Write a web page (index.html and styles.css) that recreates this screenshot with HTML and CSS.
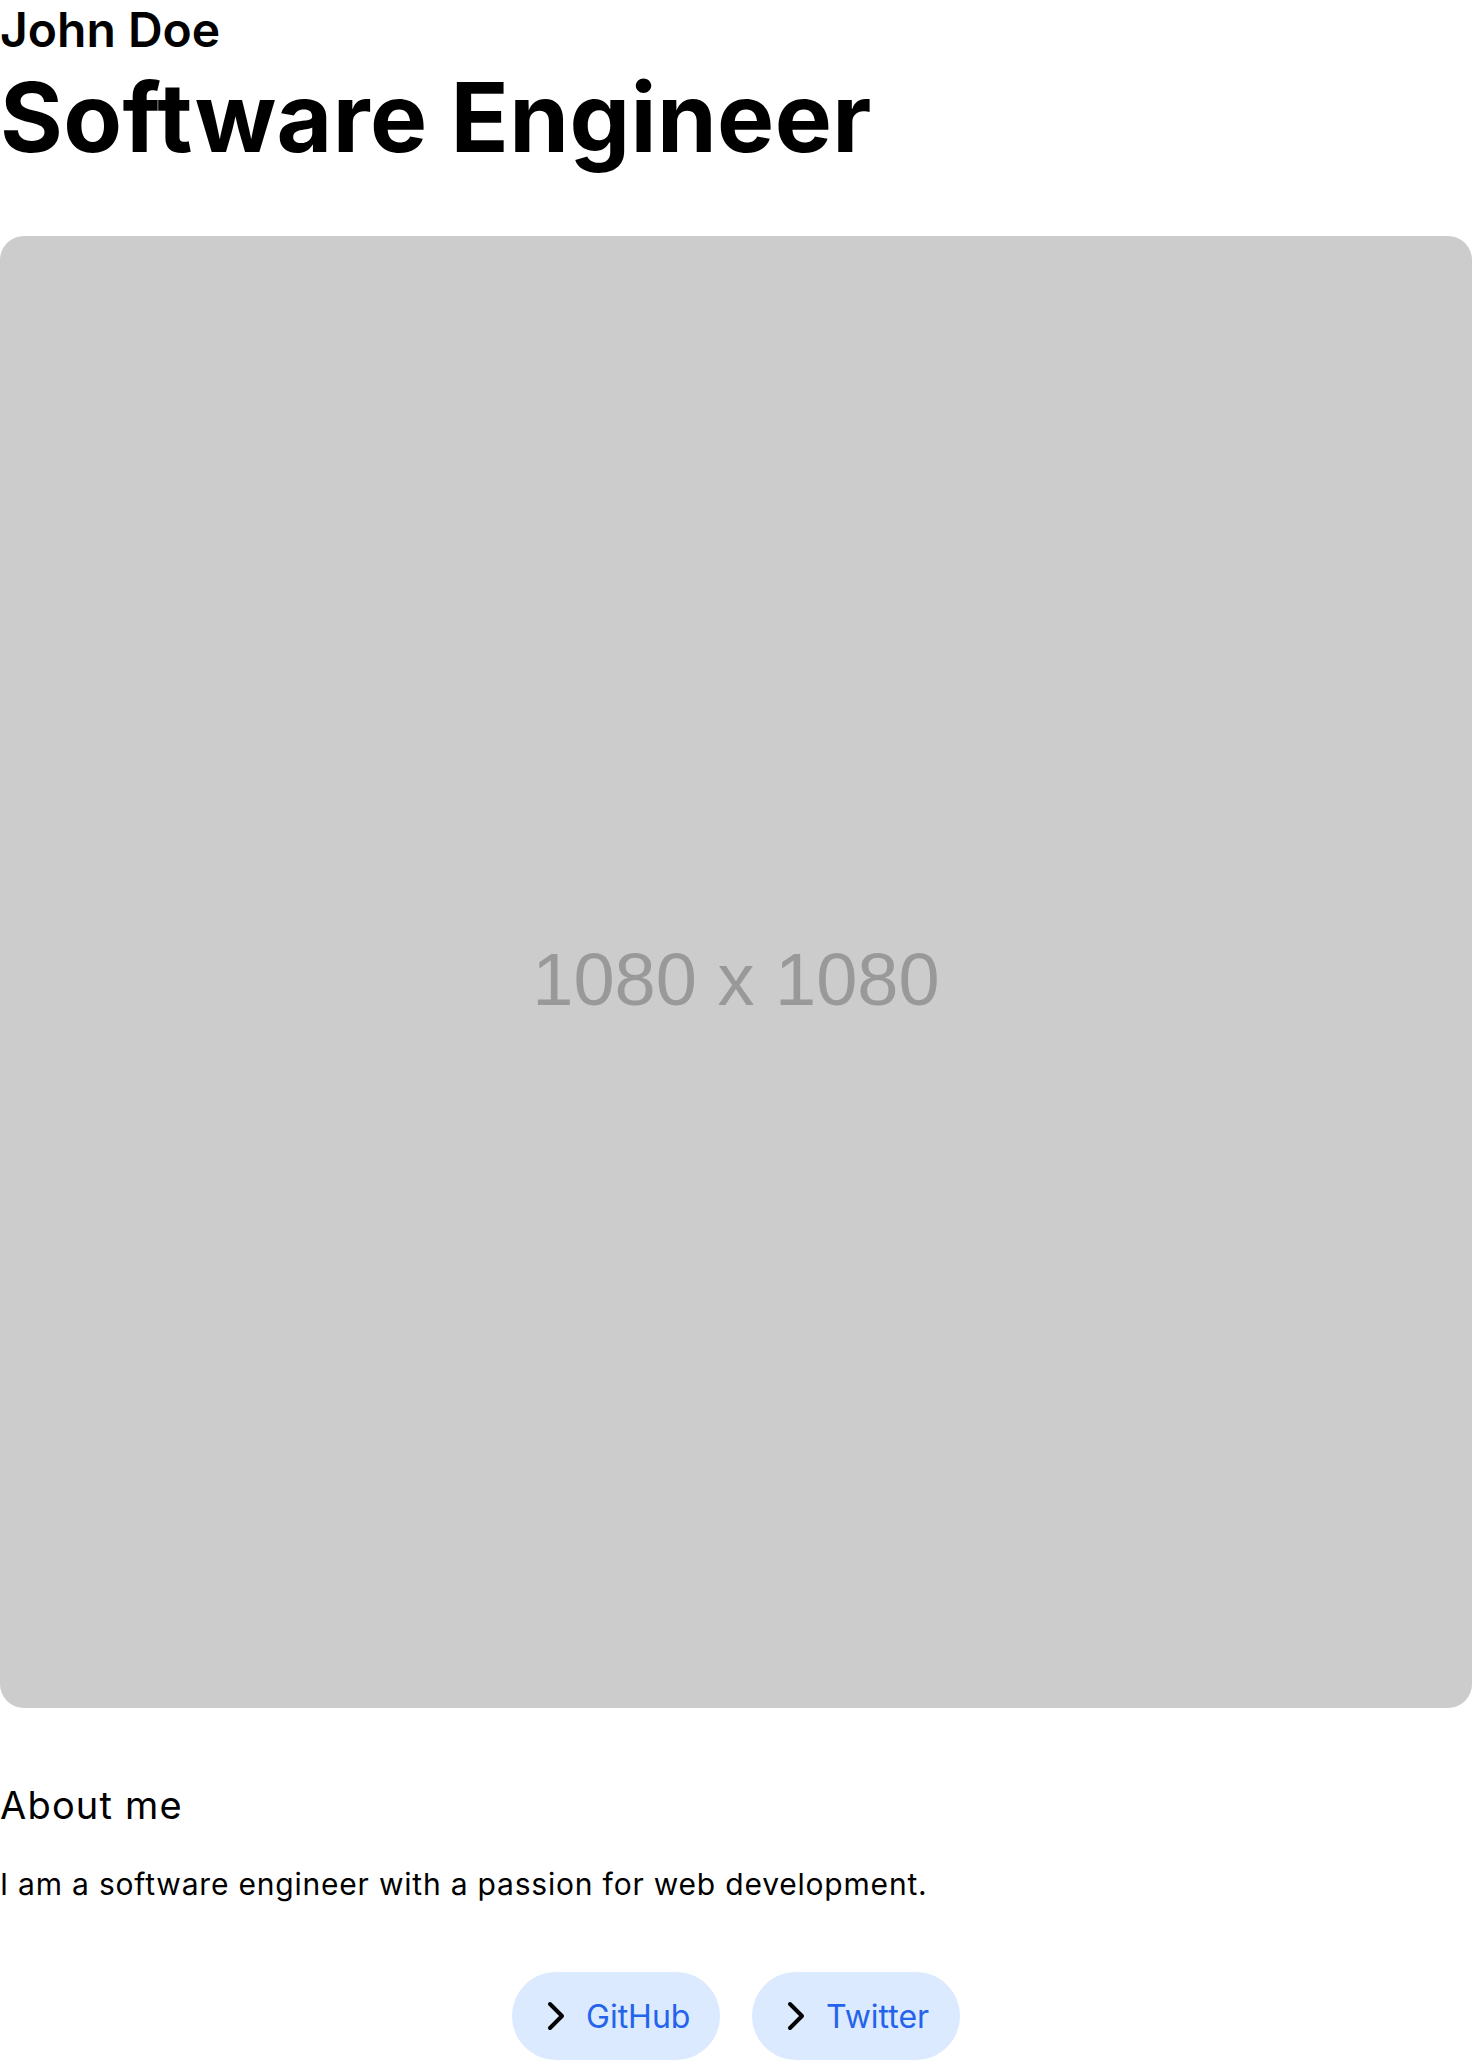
FILE: index.html
```html
<!DOCTYPE html>
<html lang="en">
<head>
<meta charset="utf-8">
<title>John Doe - Software Engineer</title>
<link rel="stylesheet" href="styles.css">
</head>
<body>
<main class="page">
  <header class="intro">
    <h1 class="name">John Doe</h1>
    <h2 class="role">Software Engineer</h2>
  </header>
  <div class="photo"><span class="photo-label">1080 x 1080</span></div>
  <section class="about">
    <h3 class="about-title">About me</h3>
    <p class="about-text">I am a software engineer with a passion for web development.</p>
  </section>
  <nav class="links">
    <a class="link" href="#">
      <svg class="chev" viewBox="0 0 24 24" width="48" height="48" fill="none" stroke="#000" stroke-width="2" stroke-linecap="round" stroke-linejoin="round"><path d="m9 18 6-6-6-6"/></svg>
      <span>GitHub</span>
    </a>
    <a class="link" href="#">
      <svg class="chev" viewBox="0 0 24 24" width="48" height="48" fill="none" stroke="#000" stroke-width="2" stroke-linecap="round" stroke-linejoin="round"><path d="m9 18 6-6-6-6"/></svg>
      <span>Twitter</span>
    </a>
  </nav>
</main>
</body>
</html>
```
FILE: styles.css
```css
* { box-sizing: border-box; }
html, body { margin: 0; padding: 0; background: #fff; }
body {
  font-family: Inter, "Noto Sans", sans-serif;
  color: #000;
}
.page { width: 1472px; }
.intro { margin: 0; }
.name {
  margin: 0;
  font-size: 48px;
  font-weight: 600;
  line-height: normal;
}
.role {
  margin: 0;
  font-size: 96px;
  font-weight: 700;
  line-height: normal;
  letter-spacing: 0.4px;
}
.photo {
  margin-top: 61px;
  width: 1472px;
  height: 1472px;
  background: #cccccc;
  border-radius: 24px;
  display: flex;
  align-items: center;
  justify-content: center;
  padding-top: 14px;
}
.photo-label {
  font-family: "Liberation Sans", Arial, sans-serif;
  font-size: 74px;
  color: #999999;
  line-height: normal;
}
.about { margin-top: 74px; }
.about-title {
  margin: 0;
  font-size: 38px;
  font-weight: 400;
  line-height: normal;
  letter-spacing: 1.2px;
}
.about-text {
  margin: 38px 0 0;
  font-size: 30px;
  font-weight: 400;
  line-height: normal;
  letter-spacing: 0.8px;
}
.links {
  margin-top: 70px;
  display: flex;
  justify-content: center;
  gap: 32px;
}
.link {
  display: flex;
  align-items: center;
  width: 208px;
  height: 88px;
  padding: 0 20px;
  gap: 6px;
  border-radius: 44px;
  background: #dbeafe;
  color: #2563eb;
  text-decoration: none;
  font-size: 32px;
}
.chev { flex: none; display: block; }
```
